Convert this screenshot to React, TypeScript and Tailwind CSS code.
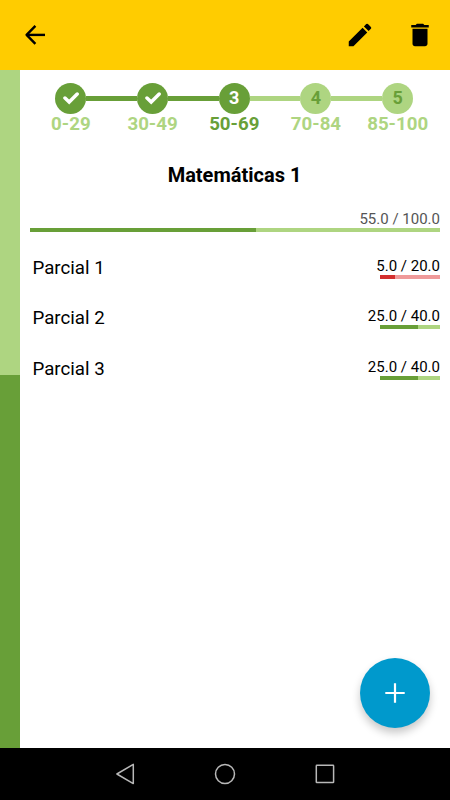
const steps = [
  { value: '1', range: '0-29', state: 'done' },
  { value: '2', range: '30-49', state: 'done' },
  { value: '3', range: '50-69', state: 'current' },
  { value: '4', range: '70-84', state: 'pending' },
  { value: '5', range: '85-100', state: 'pending' },
];

const items = [
  { name: 'Parcial 1', score: 5, total: 20, low: true },
  { name: 'Parcial 2', score: 25, total: 40, low: false },
  { name: 'Parcial 3', score: 25, total: 40, low: false },
];

function Header() {
  return (
    <header className="flex h-[70px] shrink-0 items-center bg-[#ffcc00] pr-[15px] pl-[20px] text-black">
      <svg className="mr-auto h-[30px] w-[30px]" viewBox="0 0 30 30" fill="none" stroke="currentColor" strokeWidth="2.4" strokeLinejoin="round">
        <path d="M25 14.9H7" />
        <path d="M15.4 5.9L6.6 14.9L15.4 23.9" />
      </svg>
      <svg className="h-[30px] w-[30px]" viewBox="0 0 24 24" fill="currentColor">
        <path d="M3 17.25V21h3.75L17.81 9.94l-3.75-3.75L3 17.25zM20.71 7.04a1 1 0 0 0 0-1.41l-2.34-2.34a1 1 0 0 0-1.41 0l-1.83 1.83 3.75 3.75 1.83-1.83z" />
      </svg>
      <svg className="ml-[30px] h-[30px] w-[30px]" viewBox="0 0 24 24" fill="currentColor">
        <path d="M6 19c0 1.1.9 2 2 2h8c1.1 0 2-.9 2-2V7H6v12zM19 4h-3.5l-1-1h-5l-1 1H5v2h14V4z" />
      </svg>
    </header>
  );
}

function Stepper() {
  return (
    <div className="ml-[10px] flex w-[408.5px] pt-[12.5px]">
      {steps.map((s, i) => {
        const pending = s.state === 'pending';
        const nextPending = i < steps.length - 1 && steps[i + 1].state === 'pending';
        return (
          <div key={s.value} className="flex flex-1 flex-col items-center">
            <div className="flex w-full items-center">
              <div className={`h-[5px] flex-1 ${i === 0 ? 'bg-transparent' : pending ? 'bg-[#aed581]' : 'bg-[#689f38]'}`} />
              <div
                className={`flex h-[31px] w-[31px] items-center justify-center rounded-full text-[18px] leading-none font-bold ${
                  pending ? 'bg-[#aed581] text-[#689f38]' : 'bg-[#689f38] text-white'
                }`}
              >
                {s.state === 'done' ? (
                  <svg
                    className="h-[16px] w-[16px]"
                    viewBox="0 0 16 16"
                    fill="none"
                    stroke="currentColor"
                    strokeWidth="3.5"
                    strokeLinecap="round"
                  >
                    <path d="M2 8L6.2 12L14.2 4" />
                  </svg>
                ) : (
                  s.value
                )}
              </div>
              <div
                className={`h-[5px] flex-1 ${
                  i === steps.length - 1 ? 'bg-transparent' : nextPending ? 'bg-[#aed581]' : 'bg-[#689f38]'
                }`}
              />
            </div>
            <span
              className={`text-[18.7px] leading-[21px] font-bold whitespace-nowrap ${
                s.state === 'current' ? 'text-[#689f38]' : 'text-[#aed581]'
              }`}
            >
              {s.range}
            </span>
          </div>
        );
      })}
    </div>
  );
}

function Progress({ ratio, low = false }: { ratio: number; low?: boolean }) {
  return (
    <div className={`h-[4px] ${low ? 'bg-[#ef9a9a]' : 'bg-[#aed581]'}`}>
      <div className={`h-full ${low ? 'bg-[#d32f2f]' : 'bg-[#689f38]'}`} style={{ width: `${ratio * 100}%` }} />
    </div>
  );
}

function NavBar() {
  return (
    <nav className="flex h-[52px] shrink-0 items-center justify-center gap-[76px] bg-black text-[#b8b8b8]">
      <svg className="h-6 w-6" viewBox="0 0 24 24" fill="none" stroke="currentColor" strokeWidth="1.5" strokeLinejoin="round">
        <path d="M20.3 2.4V21.6L3.9 12Z" />
      </svg>
      <svg className="h-6 w-6" viewBox="0 0 24 24" fill="none" stroke="currentColor" strokeWidth="1.5">
        <circle cx="12" cy="12" r="9.5" />
      </svg>
      <svg className="h-6 w-6" viewBox="0 0 24 24" fill="none" stroke="currentColor" strokeWidth="1.5">
        <rect x="3.3" y="3.3" width="17.3" height="17.3" rx="0.6" />
      </svg>
    </nav>
  );
}

export default function App() {
  return (
    <div className="flex h-[800px] w-[450px] flex-col overflow-hidden bg-white font-['Roboto','Liberation_Sans',sans-serif] text-black">
      <Header />
      <div className="flex min-h-0 flex-1">
        <aside className="flex w-[20px] shrink-0 flex-col">
          <div className="h-[305px] bg-[#aed581]" />
          <div className="flex-1 bg-[#689f38]" />
        </aside>
        <main className="flex flex-1 flex-col">
          <Stepper />
          <h1 className="mt-[28px] text-center text-[20px] leading-[24px] font-bold">
            <span className="-ml-[1px]">Matemáticas 1</span>
          </h1>
          <div className="mt-[23px] mr-[10px] ml-[10px]">
            <div className="text-right text-[15px] leading-[18px] text-[#555555]">55.0 / 100.0</div>
            <Progress ratio={0.55} />
          </div>
          <ul className="mt-[11px] pr-[10px] pl-[12.5px]">
            {items.map((it) => (
              <li key={it.name} className="flex h-[50.6px] items-center justify-between">
                <span className="text-[18.7px] leading-[22px]">{it.name}</span>
                <div className="flex flex-col items-end">
                  <span className="text-[15px] leading-[18px]">
                    {it.score.toFixed(1)} / {it.total.toFixed(1)}
                  </span>
                  <div className="w-[60px]">
                    <Progress ratio={it.score / it.total} low={it.low} />
                  </div>
                </div>
              </li>
            ))}
          </ul>
          <button className="mt-auto mr-[20px] mb-[20.5px] flex h-[70px] w-[70px] items-center justify-center self-end rounded-full bg-[#0099cc] text-white shadow-[0_5px_9px_rgba(0,0,0,0.22)]">
            <svg className="h-5 w-5" viewBox="0 0 20 20" fill="none" stroke="currentColor" strokeWidth="2.2">
              <path d="M10 0.3V19.7M0.3 10H19.7" />
            </svg>
          </button>
        </main>
      </div>
      <NavBar />
    </div>
  );
}
